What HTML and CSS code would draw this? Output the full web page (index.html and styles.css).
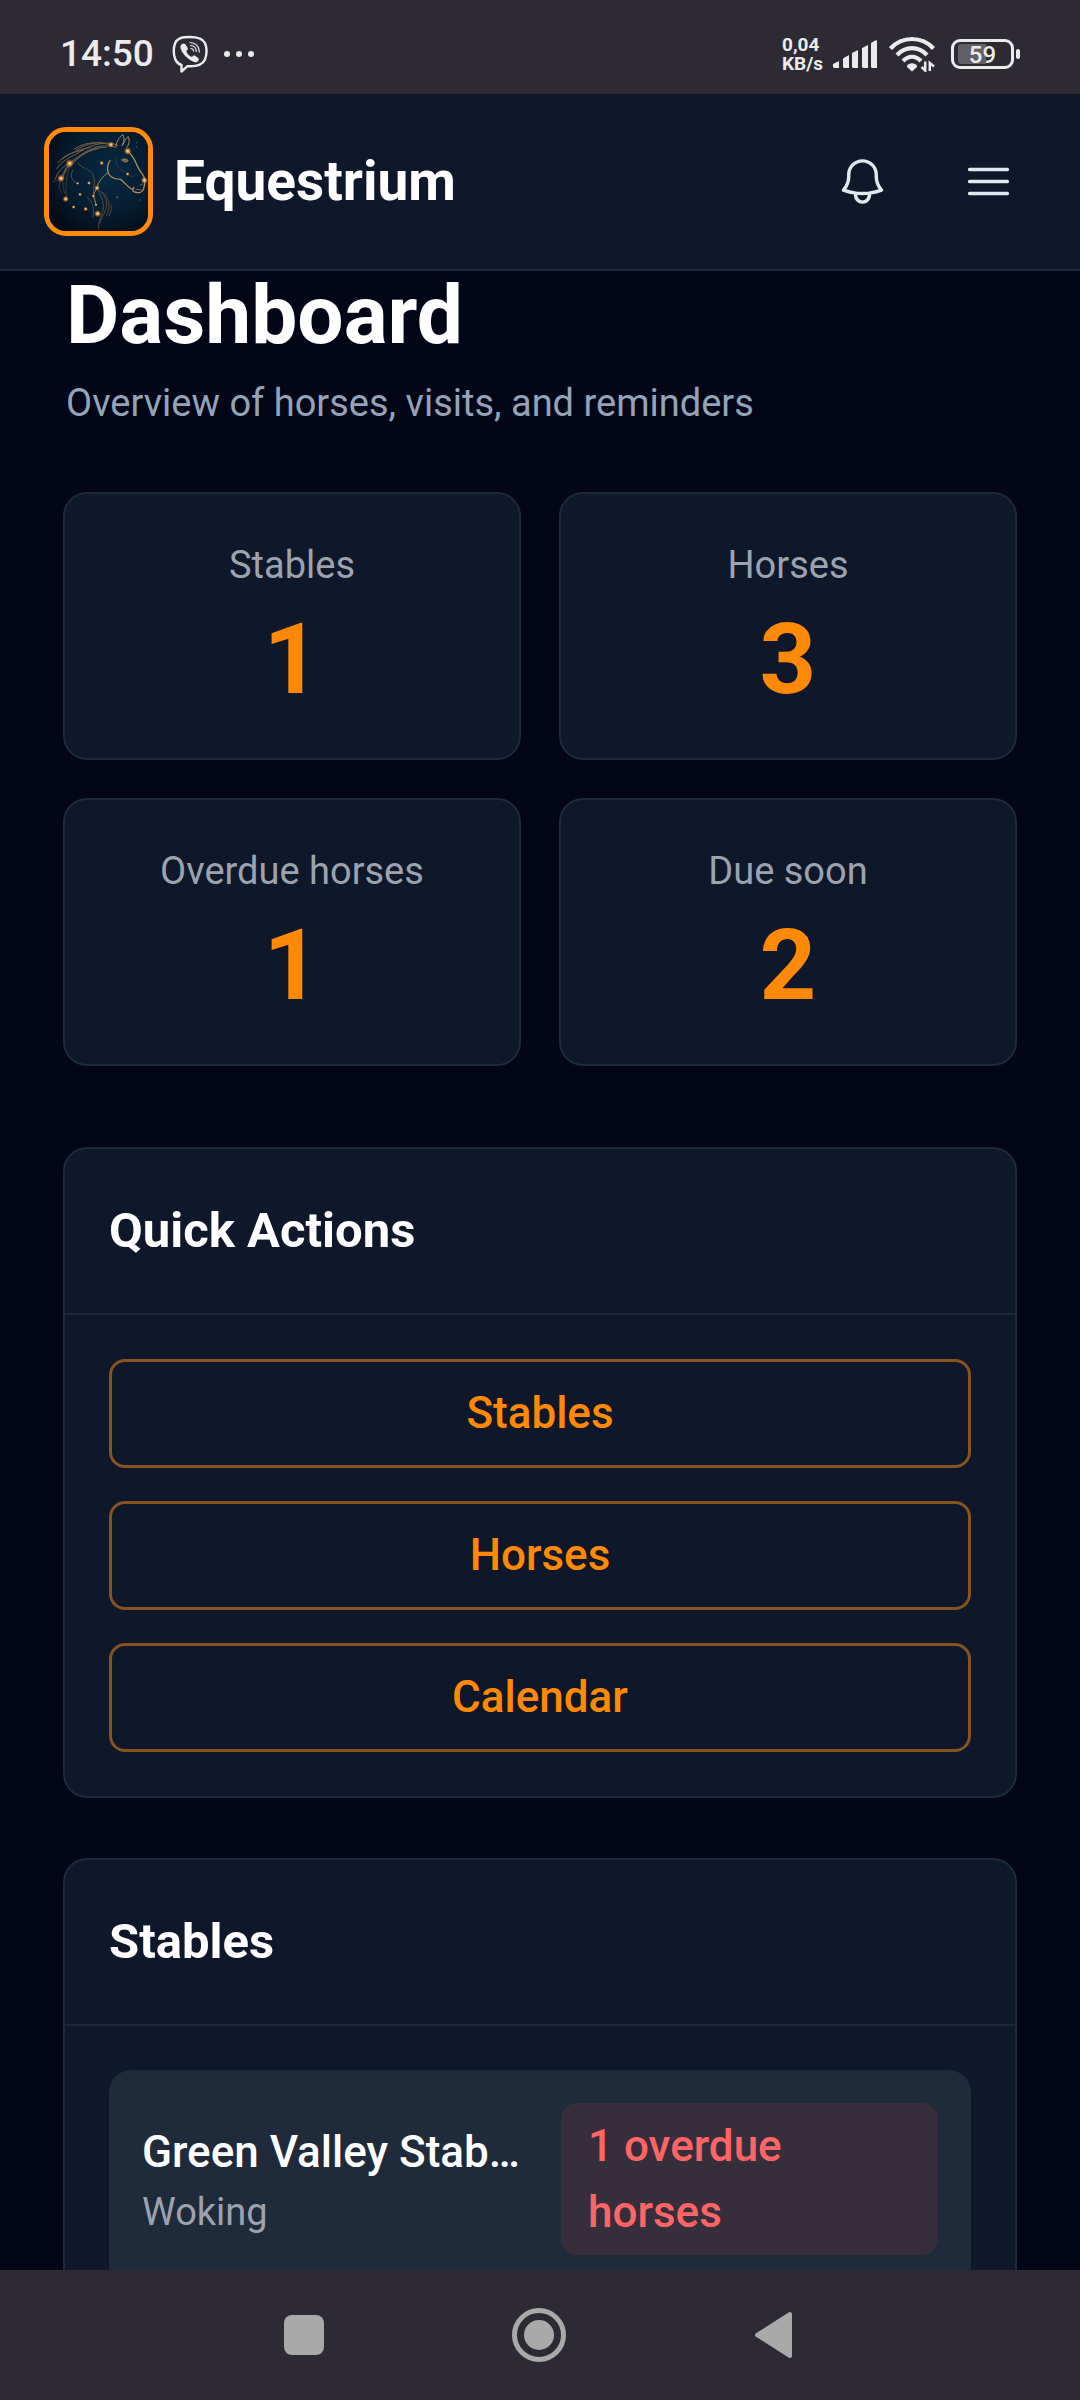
FILE: index.html
```html
<!DOCTYPE html>
<html lang="en">
<head>
  <meta charset="UTF-8" />
  <meta name="viewport" content="width=device-width, initial-scale=1.0"/>
  <title>Dashboard - Equestrium</title>
  <link rel="stylesheet" href="styles.css">
</head>
<body>
  <!-- Status bar -->
  <div class="status-bar">
    <div class="status-left">
      <span class="clock">14:50</span>
      <svg class="icon-viber" viewBox="0 0 36 38" fill="none" stroke="currentColor" stroke-linecap="round" stroke-linejoin="round">
        <path stroke-width="2.4" d="M18 2C9 2 5 3.500 3 8.500C1.500 13 1.500 19 3 23.500C4.200 27 6.500 29 9.500 30V36.500L15.500 31.200C25 31.800 30.500 30 33 24.500C34.800 19.500 34.800 12.500 33 8C30.500 3.200 26 2 18 2Z"/>
        <path fill="currentColor" stroke="none" d="M9.500 9.500C11 8 12.500 8 13.500 9.500L15.500 12.500C16.300 14 15.500 15 14.300 16C15 19 17 21 20 22C21 20.500 22.300 20.200 23.500 21L26.500 23.200C27.500 24.500 26.500 26 25 27C21.500 28.500 10.500 21 8.500 13C8.200 11.500 8.500 10.500 9.500 9.500Z"/>
        <path stroke-width="1.200" d="M18 7.500C23.500 7.500 27.300 11.500 27.300 17M18.500 10.500C22 10.800 24.300 13 24.300 16.500M19 13.500C20.700 13.700 21.500 14.500 21.600 16"/>
      </svg>
      <svg class="icon-more" viewBox="0 0 32 8" fill="currentColor">
        <circle cx="4" cy="4" r="3"/><circle cx="16" cy="4" r="3"/><circle cx="28" cy="4" r="3"/>
      </svg>
    </div>
    <div class="status-right">
      <div class="net-speed">
        <div>0,04</div>
        <div>KB/s</div>
      </div>
      <svg class="icon-signal" viewBox="0 0 44 28" fill="currentColor">
        <path d="M0 24L6 21V28H1L0 27ZM10 18.500L16 15V28H11L10 27ZM19 13L25 10V28H20L19 27ZM29 8L35 5V28H30L29 27ZM38 3L43 0L44 1V28H39L38 27Z"/>
      </svg>
      <svg class="icon-wifi" viewBox="0 0 47 36" fill="none" stroke="currentColor" stroke-width="4.200">
        <path d="M1.500 12.500C13-.2 33-.2 44.500 12.500M8 19C16.500 9.800 29.500 9.800 38 19M14 25C19.500 19.300 26.500 19.300 32 25"/>
        <path fill="currentColor" stroke="none" d="M18 29.500C21 26.500 25 26.500 28 29.500V31L23 35.500L18 31Z"/>
        <path stroke-width="2.500" d="M36.200 25.500V34.500L32.500 31M40.800 35V27L45 30.500"/>
      </svg>
      <div class="battery"><span class="battery-text">59</span></div>
      <div class="battery-nub"></div>
    </div>
  </div>

  <!-- Header -->
  <header class="header">
    <svg class="logo" viewBox="57 66 297 297" fill="none" stroke-linecap="round" stroke-linejoin="round">
      <defs>
        <radialGradient id="sky" cx="0.6" cy="0.4" r="0.7">
          <stop offset="0" stop-color="#082a44"/>
          <stop offset="0.6" stop-color="#061c30"/>
          <stop offset="1" stop-color="#030c18"/>
        </radialGradient>
        <radialGradient id="glow">
          <stop offset="0" stop-color="#fff0b8"/>
          <stop offset="0.300" stop-color="#f0a850"/>
          <stop offset="1" stop-color="#c06820" stop-opacity="0"/>
        </radialGradient>
      </defs>
      <rect x="57" y="66" width="297" height="297" fill="url(#sky)"/>
      <!-- mane -->
      <g stroke="#94704a" stroke-width="3" opacity="0.800">
        <path d="M264 106C232 90 180 104 145 128C118 144 98 150 80 176"/>
        <path d="M258 112C220 98 175 116 145 140C122 152 105 172 94 205"/>
        <path d="M240 104C205 92 170 100 138 120"/>
        <path d="M225 100C190 96 160 98 132 118"/>
        <path d="M230 112C190 110 160 130 136 150C118 162 106 176 100 196"/>
        <path d="M160 120C125 125 100 138 84 158"/>
        <path d="M180 112C150 118 118 130 96 148"/>
        <path d="M205 116C160 124 135 152 116 172"/>
        <path d="M118 160C96 170 80 190 76 208"/>
      </g>
      <g stroke="#80603c" stroke-width="2" opacity="0.700">
        <path d="M116 172C100 190 92 215 104 250"/>
        <path d="M93 205C84 212 76 214 68 215"/>
        <path d="M94 206C84 225 88 240 94 248"/>
        <path d="M130 158C110 180 104 220 110 266"/>
      </g>
      <!-- head -->
      <g stroke="#b08a58" stroke-width="3">
        <path d="M258 110C258 98 266 82 279 74C284 86 282 96 276 106"/>
        <path d="M278 106C282 94 288 84 295 80C299 92 298 104 290 112"/>
        <path stroke-width="4" d="M292 122C308 136 316 152 322 168C328 184 344 196 345 212C345 222 342 228 341 236C338 248 326 250 314 246C306 244 308 236 312 232"/>
        <path stroke-width="4" d="M308 238C294 234 284 216 272 208C256 208 244 204 236 192C230 178 232 164 240 152"/>
        <path d="M234 188C218 200 204 216 201 234C192 248 188 258 194 268L198 286"/>
        <path fill="#7c6240" stroke-width="2" d="M275 150C280 144 290 146 295 152C292 158 282 158 275 150Z"/>
        <path stroke-width="2" d="M330 226L338 222M318 238L336 240"/>
      </g>
      <!-- neck and chest -->
      <g stroke="#7c5e3e" stroke-width="2">
        <path d="M143 158C155 176 178 176 188 192C196 206 192 225 190 250"/>
        <path d="M128 180C120 198 124 214 143 220"/>
        <path d="M200 234C215 262 226 280 217 308C210 328 204 340 206 357"/>
        <path d="M208 242C232 258 234 288 224 306C216 324 212 330 208 340"/>
        <path d="M218 246C240 268 242 292 230 316"/>
        <path d="M172 262C190 278 194 296 188 322"/>
        <path d="M243 285C246 300 242 310 236 318"/>
        <path d="M260 146C254 162 264 176 293 192C304 202 310 202 316 194" opacity="0.500"/>
      </g>
      <g fill="url(#glow)">
        <circle cx="119" cy="160" r="13"/><circle cx="93" cy="205" r="12"/><circle cx="107" cy="267" r="10"/>
        <circle cx="131" cy="291" r="6"/><circle cx="167" cy="297" r="7"/><circle cx="203" cy="311" r="11"/>
        <circle cx="201" cy="234" r="9"/><circle cx="243" cy="104" r="10"/><circle cx="293" cy="123" r="12"/>
        <circle cx="343" cy="211" r="11"/><circle cx="215" cy="159" r="7"/><circle cx="293" cy="192" r="6"/>
        <circle cx="150" cy="253" r="6"/><circle cx="177" cy="219" r="6"/><circle cx="143" cy="220" r="5"/>
        <circle cx="190" cy="258" r="6"/><circle cx="198" cy="284" r="5"/>
      </g>
      <g fill="#2b6f96">
        <circle cx="320" cy="98" r="2"/><circle cx="320" cy="110" r="2"/><circle cx="262" cy="262" r="3"/><circle cx="330" cy="270" r="2"/>
      </g>
    </svg>
    <span class="brand">Equestrium</span>
    <nav class="header-actions">
      <button class="icon-btn" type="button" aria-label="Notifications">
        <svg viewBox="0 0 24 24" fill="none" stroke="currentColor" stroke-width="1.500" stroke-linecap="round" stroke-linejoin="round">
          <path d="M14.857 17.082a23.848 23.848 0 0 0 5.454-1.310A8.967 8.967 0 0 1 18 9.750V9A6 6 0 0 0 6 9v.750a8.967 8.967 0 0 1-2.312 6.022c1.733.640 3.560 1.085 5.455 1.310m5.714 0a24.255 24.255 0 0 1-5.714 0m5.714 0a3 3 0 1 1-5.714 0"/>
        </svg>
      </button>
      <button class="icon-btn" type="button" aria-label="Menu">
        <svg viewBox="0 0 24 24" fill="none" stroke="currentColor" stroke-width="1.500" stroke-linecap="round" stroke-linejoin="round">
          <path d="M3.750 6.750h16.500M3.750 12h16.500m-16.500 5.250h16.500"/>
        </svg>
      </button>
    </nav>
  </header>

  <!-- Content -->
  <main class="content">
    <div class="page-head">
      <h1 class="page-title">Dashboard</h1>
      <p class="page-subtitle">Overview of horses, visits, and reminders</p>
    </div>

    <section class="stats">
      <div class="stat-card">
        <div class="stat-label">Stables</div>
        <div class="stat-value">1</div>
      </div>
      <div class="stat-card">
        <div class="stat-label">Horses</div>
        <div class="stat-value">3</div>
      </div>
      <div class="stat-card">
        <div class="stat-label">Overdue horses</div>
        <div class="stat-value">1</div>
      </div>
      <div class="stat-card">
        <div class="stat-label">Due soon</div>
        <div class="stat-value">2</div>
      </div>
    </section>

    <section class="card">
      <h2 class="card-title">Quick Actions</h2>
      <div class="card-body">
        <a href="#stables" class="action-btn">Stables</a>
        <a href="#horses" class="action-btn">Horses</a>
        <a href="#calendar" class="action-btn">Calendar</a>
      </div>
    </section>

    <section class="card" id="stables">
      <h2 class="card-title">Stables</h2>
      <div class="card-body">
        <div class="stable-item">
          <div class="stable-info">
            <div class="stable-name">Green Valley Stables</div>
            <div class="stable-place">Woking</div>
          </div>
          <div class="badge-overdue">1 overdue horses</div>
        </div>
      </div>
    </section>
  </main>

  <!-- System navigation -->
  <nav class="system-nav">
    <button class="system-btn" type="button" aria-label="Recent apps">
      <svg viewBox="0 0 56 56" fill="currentColor"><rect x="8" y="8" width="40" height="40" rx="8"/></svg>
    </button>
    <button class="system-btn" type="button" aria-label="Home">
      <svg viewBox="0 0 56 56"><circle cx="28" cy="28" r="24.500" fill="none" stroke="currentColor" stroke-width="5"/><circle cx="28" cy="28" r="15" fill="currentColor"/></svg>
    </button>
    <button class="system-btn" type="button" aria-label="Back">
      <svg viewBox="0 0 56 56" fill="currentColor" stroke="currentColor" stroke-width="4" stroke-linejoin="round"><path d="M11 28L44 7V49Z"/></svg>
    </button>
  </nav>
</body>
</html>
```

FILE: styles.css
```css
* {
  box-sizing: border-box;
}

body {
  font-family: Roboto, sans-serif;
  background-color: #020617;
  color: #fff;
  margin: 0;
  height: 100vh;
  display: flex;
  flex-direction: column;
  overflow: hidden;
}

svg {
  display: block;
}

button {
  background: none;
  border: none;
  margin: 0;
  padding: 0;
  cursor: pointer;
}

/* Status bar */
.status-bar {
  flex: none;
  height: 94px;
  padding: 14px 60px 0;
  background-color: #2d2a33;
  color: #ebebeb;
  display: flex;
  justify-content: space-between;
  align-items: center;
}

.status-left,
.status-right {
  display: flex;
  align-items: center;
}

.clock {
  font-size: 37px;
  font-weight: 500;
  line-height: 44px;
}

.icon-viber {
  width: 36px;
  height: 38px;
  margin: 0 15px 0 18px;
}

.icon-more {
  width: 32px;
  height: 8px;
}

.net-speed {
  font-size: 19px;
  font-weight: 700;
  line-height: 19px;
}

.icon-signal {
  width: 44px;
  height: 28px;
  margin: 0 12px 0 10px;
}

.icon-wifi {
  width: 47px;
  height: 36px;
  margin-right: 15px;
}

.battery {
  width: 63px;
  height: 30px;
  border: 3px solid #ebebeb;
  border-radius: 9px;
  padding: 2px 4px;
  background: linear-gradient(90deg, #626067 57%, transparent 57%) content-box;
}

.battery-text {
  display: block;
  text-align: center;
  font-size: 24px;
  font-weight: 500;
  line-height: 22px;
}

.battery-nub {
  width: 4px;
  height: 10px;
  margin-left: 2px;
  border-radius: 2px;
  background-color: #ebebeb;
}

/* Header */
.header {
  flex: none;
  padding: 33px 42px 33px 44px;
  background-color: #0f172a;
  border-bottom: 2px solid #1e293b;
  display: flex;
  align-items: center;
}

.logo {
  width: 109px;
  height: 109px;
  border: 5px solid #ff8a0c;
  border-radius: 22px;
}

.brand {
  margin-left: 21px;
  font-size: 55px;
  font-weight: 700;
  line-height: 77px;
}

.header-actions {
  margin-left: auto;
  display: flex;
  gap: 27px;
}

.icon-btn {
  padding: 22px;
  color: #e2e8f0;
}

.icon-btn svg {
  width: 55px;
  height: 55px;
}

/* Content */
.content {
  flex: 1;
  min-height: 0;
  overflow: hidden;
  padding: 0 63px;
}

.page-head {
  padding: 0 3px;
}

.page-title {
  margin: 0;
  font-size: 82px;
  font-weight: 700;
  line-height: 88px;
}

.page-subtitle {
  margin: 17px 0 61px;
  color: #94a3b8;
  font-size: 38px;
  line-height: 55px;
}

.stats {
  display: grid;
  grid-template-columns: 1fr 1fr;
  gap: 38px;
  margin-bottom: 81px;
}

.stat-card,
.card {
  background-color: #0f172a;
  border: 2px solid #1e293b;
  border-radius: 24px;
}

.stat-card {
  padding: 44px;
  text-align: center;
}

.stat-label {
  margin-bottom: 11px;
  color: #9ca3af;
  font-size: 38px;
  line-height: 55px;
}

.stat-value {
  color: #ff8904;
  font-size: 99px;
  font-weight: 700;
  line-height: 110px;
}

.card {
  margin-bottom: 60px;
}

.card-title {
  margin: 0;
  padding: 44px;
  border-bottom: 2px solid #1e293b;
  font-size: 49px;
  font-weight: 700;
  line-height: 76px;
}

.card-body {
  padding: 44px;
  display: flex;
  flex-direction: column;
  gap: 33px;
}

.action-btn {
  border: 3px solid #87531f;
  border-radius: 16px;
  padding: 18px;
  color: #ff8904;
  font-size: 44px;
  font-weight: 500;
  line-height: 67px;
  text-align: center;
  text-decoration: none;
}

.action-btn:hover {
  background-color: #1e293b;
}

.stable-item {
  display: grid;
  grid-template-columns: 1fr 377px;
  gap: 33px;
  align-items: center;
  padding: 33px;
  border-radius: 22px;
  background-color: #1f2a3a;
}

.stable-info {
  min-width: 0;
}

.stable-name {
  overflow: hidden;
  white-space: nowrap;
  text-overflow: ellipsis;
  font-size: 44px;
  font-weight: 500;
  line-height: 66px;
}

.stable-place {
  color: #9ca3af;
  font-size: 38px;
  line-height: 55px;
}

.badge-overdue {
  padding: 10px 100px 10px 27px;
  border-radius: 16px;
  background-color: #372e3b;
  color: #ff6467;
  font-size: 44px;
  font-weight: 500;
  line-height: 66px;
}

/* System navigation */
.system-nav {
  flex: none;
  height: 130px;
  padding-right: 2px;
  background-color: #2d2a33;
  display: flex;
  justify-content: center;
  align-items: center;
}

.system-btn {
  width: 235px;
  height: 100%;
  color: #a9a9aa;
  display: flex;
  justify-content: center;
  align-items: center;
}

.system-btn svg {
  width: 56px;
  height: 56px;
}
```
